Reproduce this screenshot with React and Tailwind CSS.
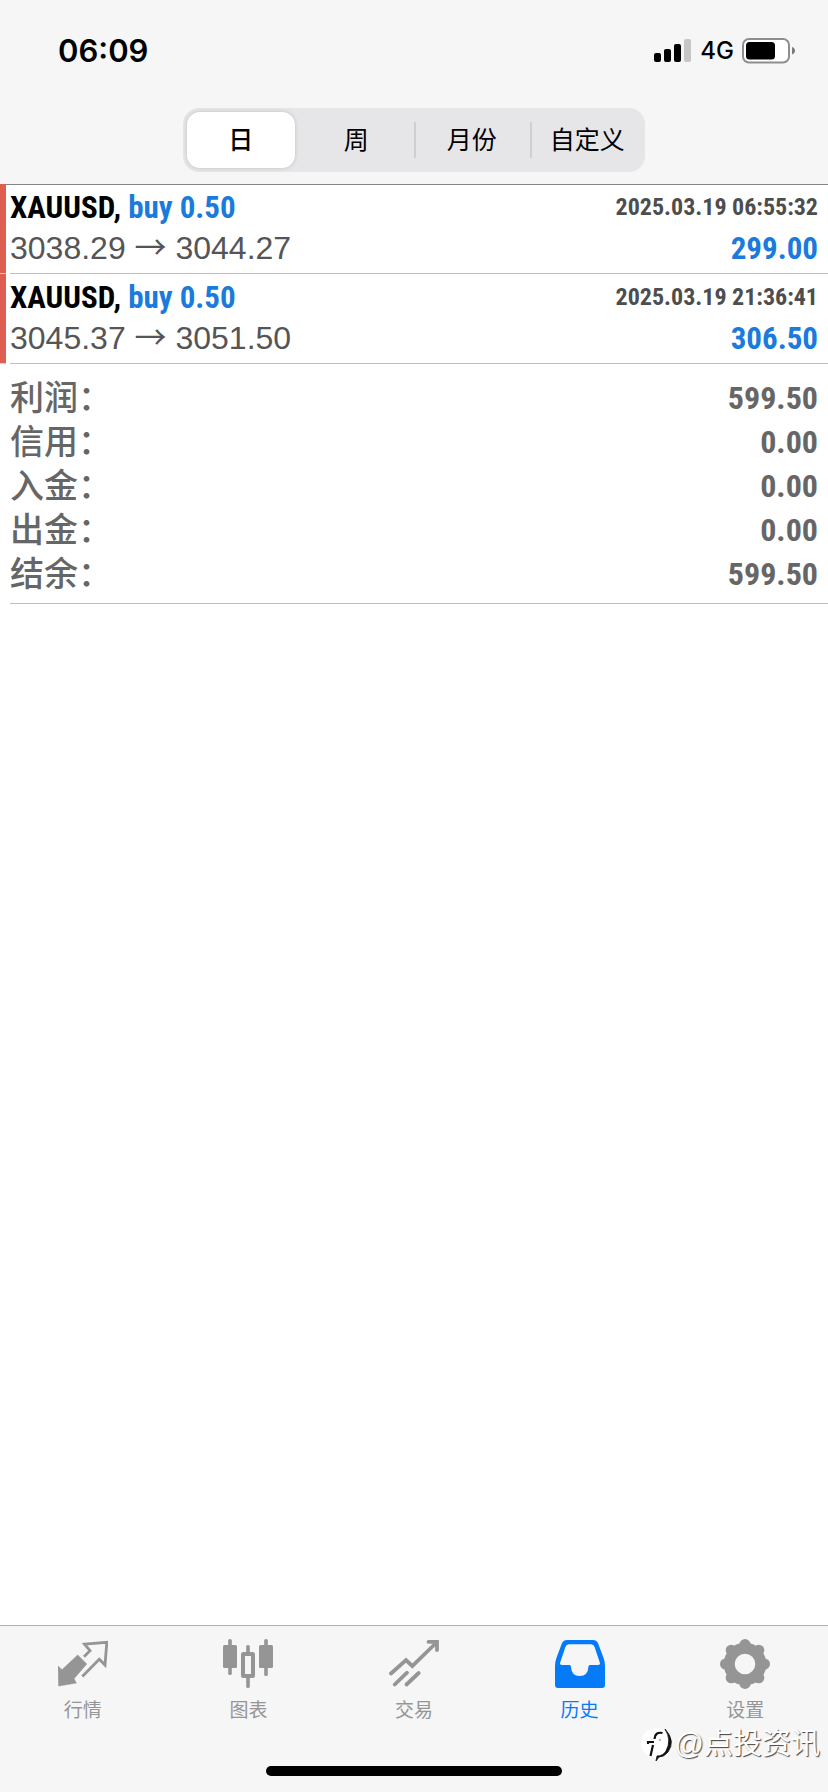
import { useState } from "react";

const RANGES = ["日", "周", "月份", "自定义"];

const DEALS = [
  { symbol: "XAUUSD", side: "buy 0.50", open: "3038.29", close: "3044.27", time: "2025.03.19 06:55:32", profit: "299.00" },
  { symbol: "XAUUSD", side: "buy 0.50", open: "3045.37", close: "3051.50", time: "2025.03.19 21:36:41", profit: "306.50" },
];

const SUMMARY = [
  { label: "利润", value: "599.50" },
  { label: "信用", value: "0.00" },
  { label: "入金", value: "0.00" },
  { label: "出金", value: "0.00" },
  { label: "结余", value: "599.50" },
];

function QuotesIcon() {
  return (
    <svg viewBox="0 0 50 52" className="w-[50px] h-[52px]" fill="none">
      <path d="M26 18.7 32 12.7 26.5 6.2 48.8 4.3 47 27 41.3 21.3 24.3 38.5" stroke="currentColor" strokeWidth="2.8" />
      <path d="M19.7 17 28.7 26 16 40.7 18.3 45 .7 48 0 28 4 31.7Z" fill="currentColor" stroke="currentColor" strokeWidth="0.6" strokeLinejoin="round" />
    </svg>
  );
}

function ChartIcon() {
  return (
    <svg viewBox="0 0 50 52" className="w-[50px] h-[52px]" fill="currentColor">
      <rect x="5.2" y="1" width="3.6" height="36" rx="1.6" />
      <rect x="0" y="7" width="14" height="23" rx="1.5" />
      <rect x="41.2" y="1" width="3.6" height="37" rx="1.6" />
      <rect x="36" y="7" width="14" height="23" rx="1.5" />
      <rect x="23.2" y="7" width="3.6" height="10" rx="1.6" />
      <rect x="23.2" y="38" width="3.6" height="12" rx="1.6" />
      <rect x="20" y="16" width="10" height="22" rx="0.5" fill="none" stroke="currentColor" strokeWidth="4" />
    </svg>
  );
}

function TradeIcon() {
  return (
    <svg viewBox="0 0 50 52" className="w-[50px] h-[52px]" fill="none" stroke="currentColor" strokeWidth="3.8" strokeLinecap="round">
      <path d="M2 35.5 17 22 23.3 28 47.5 4.5" />
      <path d="M39.5 3.8H48V12" />
      <path d="M5.7 46.5 18 34.7M17.5 46.5 29.7 35" />
    </svg>
  );
}

function HistoryIcon() {
  return (
    <svg viewBox="0 0 50 52" className="w-[50px] h-[52px]" fill="currentColor">
      <path
        fillRule="evenodd"
        d="M12 2H38Q41.5 2 43 5L48.6 20Q50 24 50 28V47Q50 50 47 50H3Q0 50 0 47V28Q0 24 1.4 20L7 5Q8.5 2 12 2ZM14 6.3Q11.3 6.3 10.4 9L5.2 24.5Q4.6 27 7 27H14.5Q16 27 16 29Q16.5 38 24.7 38Q33 38 33.4 29Q33.4 27 35 27H43Q45.4 27 44.8 24.5L39.6 9Q38.7 6.3 36 6.3Z"
      />
    </svg>
  );
}

function SettingsIcon() {
  return (
    <svg viewBox="0 0 50 52" className="w-[50px] h-[52px]" fill="currentColor">
      <circle cx="25" cy="26" r="15.8" fill="none" stroke="currentColor" strokeWidth="11" />
      {[0, 45, 90, 135, 180, 225, 270, 315].map((deg) => (
        <circle key={deg} cx="25" cy="6.6" r="5.6" transform={`rotate(${deg} 25 26)`} />
      ))}
    </svg>
  );
}

const TABS = [
  { label: "行情", icon: QuotesIcon },
  { label: "图表", icon: ChartIcon },
  { label: "交易", icon: TradeIcon },
  { label: "历史", icon: HistoryIcon },
  { label: "设置", icon: SettingsIcon },
];

function StatusBar() {
  return (
    <div className="flex items-center justify-between pt-7 pl-[58px] pr-8">
      <span className="font-[Inter,sans-serif] text-[31px] leading-[46px] font-semibold">06:09</span>
      <div className="flex items-center gap-2">
        <svg viewBox="0 0 38 24" className="w-[38px] h-6">
          <rect x="0" y="14" width="7" height="9" rx="2" />
          <rect x="10" y="10" width="7" height="13" rx="2" />
          <rect x="20" y="5" width="7" height="18" rx="2" />
          <rect x="30" y="0" width="7" height="23" rx="2" fill="#c6c6c6" />
        </svg>
        <span className="font-[Inter,sans-serif] text-[24px] leading-[46px] font-medium">4G</span>
        <svg viewBox="0 0 54 26" className="w-[54px] h-[26px]">
          <rect x="1" y="1" width="46" height="23.5" rx="6" fill="#fff" stroke="#8e8e8e" strokeWidth="2" />
          <rect x="4" y="4" width="29" height="17.5" rx="3.5" />
          <path d="M50 9Q53 10 53 12.8Q53 15.5 50 16.5Z" fill="#7a7a7a" />
        </svg>
      </div>
    </div>
  );
}

export default function App() {
  const [range, setRange] = useState("日");
  const [tab, setTab] = useState("历史");

  return (
    <div className="min-h-screen flex flex-col bg-white text-black font-['Liberation_Sans','Noto_Sans_CJK_SC',sans-serif]">
      {/* Header */}
      <header className="bg-[#f6f6f6] border-b border-[#858585] pb-3">
        <StatusBar />
        <div className="mt-[34px] mx-auto w-full max-w-[462px] h-16 grid grid-cols-4 py-1 rounded-2xl bg-[#e6e6e8]">
          {RANGES.map((item, i) => (
            <div key={item} className="relative flex">
              {i > 1 && <span className="absolute left-0 top-[10px] bottom-[10px] w-[2px] bg-[#cfcfd2]" />}
              <button
                type="button"
                onClick={() => setRange(item)}
                className={`flex-1 mx-1 rounded-[13px] text-[25px] leading-8 whitespace-nowrap ${
                  range === item ? "bg-white font-medium shadow-[0_0_4px_rgba(0,0,0,0.16)]" : ""
                }`}
              >
                {item}
              </button>
            </div>
          ))}
        </div>
      </header>

      <main className="flex-1">
        {/* Closed deals */}
        <ul className="-mt-px">
          {DEALS.map((deal) => (
            <li key={deal.time} className="flex">
              <span className="w-[6px] mr-1 border-b border-[#f3c4bf] bg-[#de5f52]" />
              <div className="flex-1 flex justify-between pr-[10px] pt-[3px] pb-[4px] border-b border-[#c0c0c2]">
                <div>
                  <p className="font-['Roboto_Condensed',Roboto,sans-serif] font-bold text-[31px] leading-[41px]">
                    {deal.symbol}, <span className="text-[#1a7bdc]">{deal.side}</span>
                  </p>
                  <p className="text-[32px] leading-[41px] text-[#555557]">
                    {deal.open} <span className="font-['Noto_Sans_CJK_SC',sans-serif] leading-none">→</span> {deal.close}
                  </p>
                </div>
                <div className="text-right font-['Roboto_Condensed',Roboto,sans-serif] font-bold">
                  <p className="text-[24px] leading-[41px] text-[#4d4d4f]">{deal.time}</p>
                  <p className="text-[31px] leading-[41px] text-[#1a7bdc]">{deal.profit}</p>
                </div>
              </div>
            </li>
          ))}
        </ul>

        {/* Totals */}
        <dl className="ml-[10px] pt-3 pb-[7px] pr-[10px] border-b border-[#c0c0c2] text-[#666]">
          {SUMMARY.map((row) => (
            <div key={row.label} className="flex justify-between leading-[44px]">
              <dt className="text-[34px] font-medium">{row.label}：</dt>
              <dd className="text-[32px] font-['Roboto_Condensed',Roboto,sans-serif] font-bold">{row.value}</dd>
            </div>
          ))}
        </dl>
      </main>

      {/* Tab bar */}
      <footer className="relative bg-[#f6f6f6] border-t border-[#b0b0b2] pt-3 pb-4">
        <nav className="grid grid-cols-5">
          {TABS.map(({ label, icon: Icon }) => (
            <a
              key={label}
              href="#"
              onClick={() => setTab(label)}
              className={`flex flex-col items-center gap-[7px] text-[19px] leading-7 ${
                tab === label ? "text-[#067bf8]" : "text-[#959595]"
              }`}
            >
              <Icon />
              {label}
            </a>
          ))}
        </nav>
        <div className="mx-auto mt-[41px] w-[296px] h-[10px] rounded-full bg-black" />

        {/* Watermark */}
        <div className="absolute right-2 bottom-7 flex items-center text-white">
          <svg viewBox="0 0 34 36" className="w-[34px] h-9" fill="none">
            <circle cx="15" cy="17" r="15" fill="#fff" />
            <path d="M24 3Q35 15 27 26Q23 31 18 31L15 35L16 30Q22 30 25 25Q31 14 24 3Z" fill="#111" stroke="#111" strokeWidth="0.8" />
            <path d="M21.5 7Q14 5.5 13.5 13M7 18V16H13M12 19L9.5 30" stroke="#111" strokeWidth="2.2" />
            <path d="M18 14H20" stroke="#777" strokeWidth="1" />
          </svg>
          <span className="text-[29px] leading-10 [text-shadow:1px_1px_1px_#444]">@点投资讯</span>
        </div>
      </footer>
    </div>
  );
}
